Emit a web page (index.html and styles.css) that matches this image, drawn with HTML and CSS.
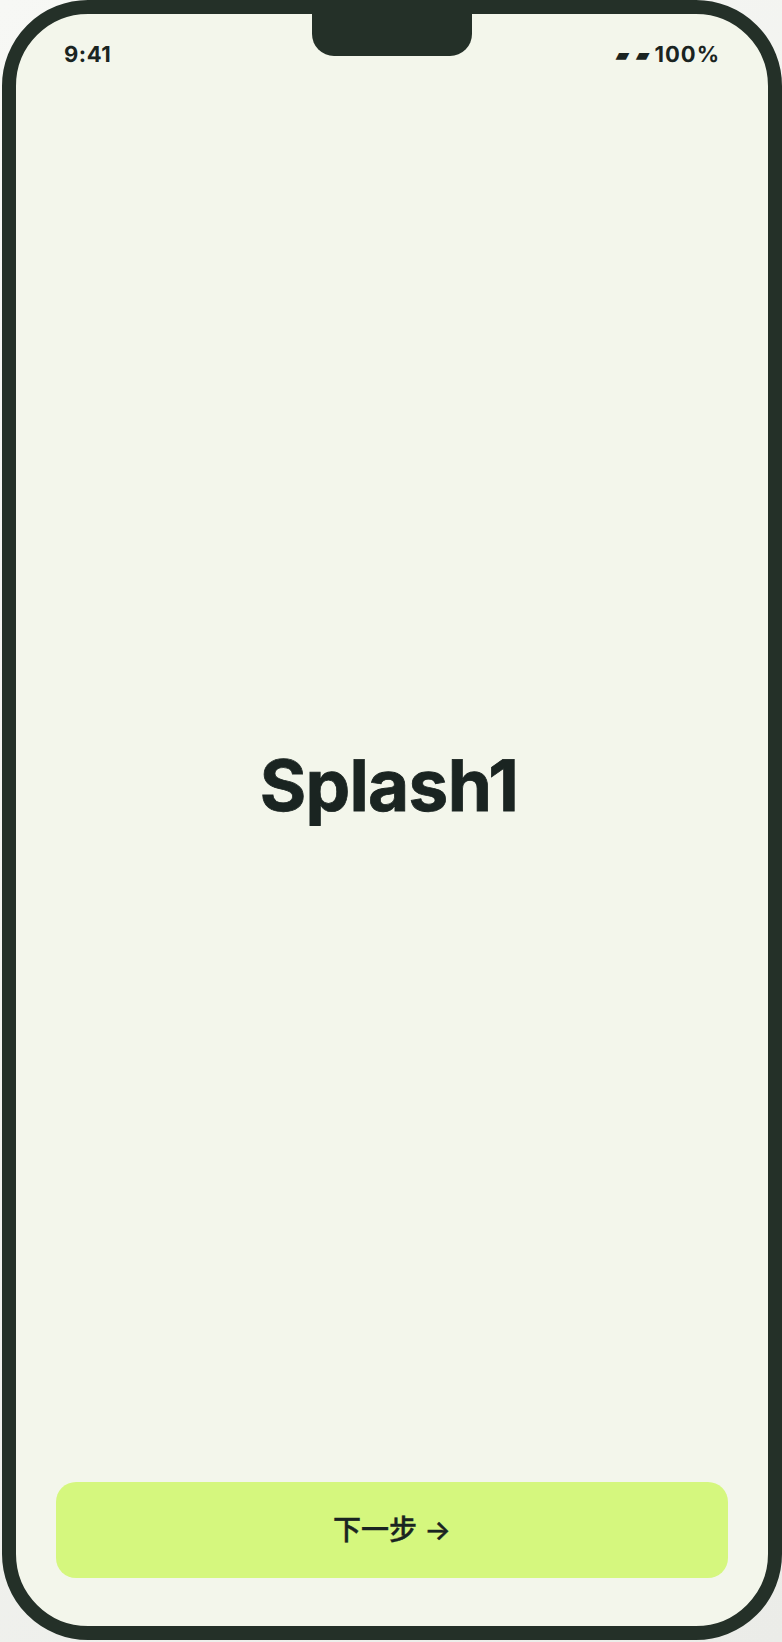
FILE: index.html
```html
<!DOCTYPE html>
<html lang="zh-CN">
<head>
    <meta charset="UTF-8">
    <meta name="viewport" content="width=device-width, initial-scale=1.0">
    <title>Splash1</title>
    <link rel="stylesheet" href="styles.css">
</head>
<body>
    <div class="phone">
        <div class="notch"></div>
        <div class="status-bar">
            <span class="status-time">9:41</span>
            <span class="status-right">
                <span class="status-signal">▰ ▰</span>
                <span class="status-battery">100%</span>
            </span>
        </div>
        <div class="content">
            <h1>Splash1</h1>
        </div>
        <div class="footer">
            <button class="next-button">下一步 →</button>
        </div>
    </div>
</body>
</html>
```
FILE: styles.css
```css
* {
    box-sizing: border-box;
}
body {
    margin: 0;
    padding-left: 2px;
    height: 1642px;
    background: linear-gradient(135deg, #f7f8f5 0%, #ebece8 100%);
    font-family: Inter, "Noto Sans CJK SC", sans-serif;
    color: #1a2421;
    text-rendering: geometricPrecision;
}
.phone {
    position: relative;
    width: 780px;
    height: 1640px;
    border: 14px solid #243028;
    border-radius: 86px;
    background: #f3f6eb;
    display: flex;
    flex-direction: column;
}
.notch {
    position: absolute;
    top: 0;
    left: 296px;
    width: 160px;
    height: 42px;
    background: #243028;
    border-radius: 0 0 22px 22px;
}
.status-bar {
    height: 76px;
    padding: 6px 48px 0 48px;
    display: flex;
    justify-content: space-between;
    align-items: center;
    font-size: 22px;
    font-weight: 700;
    letter-spacing: 0.5px;
}
.status-right {
    display: flex;
    align-items: center;
    gap: 5px;
}
.status-battery {
    letter-spacing: 1px;
}
.status-signal {
    font-size: 18px;
    font-family: "DejaVu Sans", sans-serif;
    letter-spacing: 0;
}
.content {
    flex: 1;
    display: flex;
    justify-content: center;
    align-items: center;
}
h1 {
    margin: 0 6px 0 0;
    font-size: 71px;
    font-weight: 700;
    letter-spacing: -0.7px;
    -webkit-text-stroke: 0.8px #1a2421;
}
.footer {
    padding: 0 40px 48px;
}
.next-button {
    display: block;
    width: 100%;
    height: 96px;
    padding: 0 0 4px;
    border: none;
    border-radius: 20px;
    background: #d5f77e;
    color: #1a2421;
    font-family: inherit;
    font-size: 28px;
    font-weight: 500;
    -webkit-text-stroke: 0.4px #1a2421;
}
```
